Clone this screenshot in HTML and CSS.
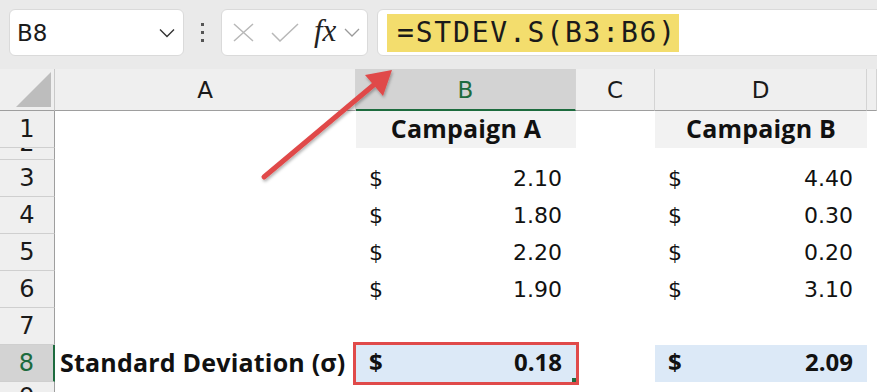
FILE: index.html
```html
<!DOCTYPE html>
<html lang="en">
<head>
    <meta charset="UTF-8">
    <title>STDEV.S</title>
    <link rel="stylesheet" href="styles.css">
</head>
<body>
    <div class="toolbar">
        <div class="namebox">
            <span>B8</span>
            <svg width="16" height="10" viewBox="0 0 16 10"><path d="M1 1.5 L8 8.5 L15 1.5" fill="none" stroke="#333" stroke-width="1.4"/></svg>
        </div>
        <div class="dots"><i></i><i></i><i></i></div>
        <div class="fxbox">
            <svg width="21" height="19" viewBox="0 0 21 19"><path d="M1 1 L20 18 M20 1 L1 18" stroke="#b8b8b8" stroke-width="1.5"/></svg>
            <svg width="28" height="19" viewBox="0 0 28 19"><path d="M1 10 L9 18 L27 1" fill="none" stroke="#b8b8b8" stroke-width="1.5"/></svg>
            <span class="fx">fx</span>
            <svg width="16" height="9" viewBox="0 0 16 9"><path d="M1 1 L8 8 L15 1" fill="none" stroke="#9a9a9a" stroke-width="1.3"/></svg>
        </div>
        <div class="formula"><span class="hl">=STDEV.S(B3:B6)</span></div>
    </div>

    <div class="sheet">
        <!-- column headers -->
        <div class="corner"><span class="tri"></span></div>
        <div class="colhead">A</div>
        <div class="colhead active">B</div>
        <div class="colhead">C</div>
        <div class="colhead">D</div>
        <div class="colhead"></div>

        <!-- row 1 -->
        <div class="rowhead">1</div>
        <div class="cell"></div>
        <div class="cell title">Campaign A</div>
        <div class="cell"></div>
        <div class="cell title">Campaign B</div>
        <div class="cell"></div>

        <!-- row 2 (squashed) -->
        <div class="rowhead tiny"><span>2</span></div>
        <div class="cell"></div>
        <div class="cell"></div>
        <div class="cell"></div>
        <div class="cell"></div>
        <div class="cell"></div>

        <!-- row 3 -->
        <div class="rowhead">3</div>
        <div class="cell"></div>
        <div class="cell acct"><span>$</span><span>2.10</span></div>
        <div class="cell"></div>
        <div class="cell acct"><span>$</span><span>4.40</span></div>
        <div class="cell"></div>

        <!-- row 4 -->
        <div class="rowhead">4</div>
        <div class="cell"></div>
        <div class="cell acct"><span>$</span><span>1.80</span></div>
        <div class="cell"></div>
        <div class="cell acct"><span>$</span><span>0.30</span></div>
        <div class="cell"></div>

        <!-- row 5 -->
        <div class="rowhead">5</div>
        <div class="cell"></div>
        <div class="cell acct"><span>$</span><span>2.20</span></div>
        <div class="cell"></div>
        <div class="cell acct"><span>$</span><span>0.20</span></div>
        <div class="cell"></div>

        <!-- row 6 -->
        <div class="rowhead">6</div>
        <div class="cell"></div>
        <div class="cell acct"><span>$</span><span>1.90</span></div>
        <div class="cell"></div>
        <div class="cell acct"><span>$</span><span>3.10</span></div>
        <div class="cell"></div>

        <!-- row 7 -->
        <div class="rowhead">7</div>
        <div class="cell"></div>
        <div class="cell"></div>
        <div class="cell"></div>
        <div class="cell"></div>
        <div class="cell"></div>

        <!-- row 8 -->
        <div class="rowhead active">8</div>
        <div class="cell label">Standard Deviation (σ)</div>
        <div class="cell acct result selected"><span>$</span><span>0.18</span><i class="handle"></i></div>
        <div class="cell"></div>
        <div class="cell acct result"><span>$</span><span>2.09</span></div>
        <div class="cell"></div>

        <!-- row 9 -->
        <div class="rowhead cut"><span>9</span></div>
        <div class="cell"></div>
        <div class="cell"></div>
        <div class="cell"></div>
        <div class="cell"></div>
        <div class="cell"></div>
    </div>

    <svg class="arrow" width="877" height="392" viewBox="0 0 877 392">
        <defs>
            <filter id="sh" x="-20%" y="-20%" width="140%" height="140%">
                <feDropShadow dx="1" dy="2" stdDeviation="1.5" flood-color="#000" flood-opacity="0.3"/>
            </filter>
        </defs>
        <g filter="url(#sh)">
            <path d="M264 177 L376 83" stroke="#e04a4a" stroke-width="5" stroke-linecap="round"/>
            <path d="M392 70 L365 75 L383 96 Z" fill="#e04a4a"/>
        </g>
    </svg>
</body>
</html>
```

FILE: styles.css
```css
body {
    margin: 0;
    padding: 0;
    width: 877px;
    height: 392px;
    overflow: hidden;
    background-color: #fff;
    font-family: "DejaVu Sans", sans-serif;
    color: #111;
    position: relative;
}

/* formula bar */
.toolbar {
    height: 69px;
    box-sizing: border-box;
    background-color: #eaeaea;
    display: flex;
    align-items: flex-start;
    padding: 9px 0 0 9px;
    overflow: hidden;
}
.namebox {
    width: 175px;
    height: 47px;
    box-sizing: border-box;
    background-color: #fff;
    border: 1px solid #dadada;
    border-radius: 6px;
    display: flex;
    align-items: center;
    justify-content: space-between;
    padding: 0 8px 0 7px;
    font-size: 23px;
    color: #1b1b1b;
}
.dots {
    width: 37px;
    height: 47px;
    display: flex;
    flex-direction: column;
    align-items: center;
    justify-content: center;
    gap: 5px;
}
.dots i {
    width: 3px;
    height: 3px;
    background-color: #555;
}
.fxbox {
    width: 147px;
    height: 47px;
    box-sizing: border-box;
    background-color: #fff;
    border: 1px solid #dadada;
    border-radius: 6px;
    display: flex;
    align-items: center;
    padding: 0 0 0 11px;
}
.fxbox svg:nth-child(2) {
    margin-left: 17px;
}
.fx {
    font-family: "Liberation Serif", serif;
    font-style: italic;
    font-size: 31px;
    color: #222;
    margin: -4px 8px 0 15px;
}
.formula {
    flex: 1;
    height: 47px;
    margin-left: 9px;
    margin-right: -10px;
    box-sizing: border-box;
    background-color: #fff;
    border: 1px solid #dadada;
    border-radius: 6px;
    padding: 4px 0 0 9px;
}
.hl {
    display: inline-block;
    height: 38px;
    line-height: 38px;
    background-color: #f3dd6d;
    padding: 0 2px 0 10px;
    font-family: "DejaVu Sans Mono", monospace;
    font-size: 28px;
    letter-spacing: 1.8px;
    color: #1a1a1a;
}

/* sheet grid */
.sheet {
    display: grid;
    grid-template-columns: 55px 301px 220px 79px 212px 10px;
    grid-template-rows: 42px 37px 12px repeat(6, 37px) 20px;
}
.corner {
    background-color: #efefef;
    border-right: 1px solid #c9c9c9;
    border-bottom: 1px solid #9e9e9e;
    position: relative;
}
.tri {
    position: absolute;
    right: 3px;
    bottom: 3px;
    width: 0;
    height: 0;
    border-left: 35px solid transparent;
    border-bottom: 35px solid #bdbdbd;
}
.colhead {
    background-color: #efefef;
    border-right: 1px solid #d4d4d4;
    border-bottom: 1px solid #9e9e9e;
    display: flex;
    align-items: flex-end;
    justify-content: center;
    padding-bottom: 7px;
    box-sizing: border-box;
    font-size: 23px;
    color: #1a1a1a;
}
.colhead.active {
    background-color: #d3d3d3;
    color: #1d6b3e;
    border-bottom: 2px solid #1d6b3e;
    padding-bottom: 6px;
}
.rowhead {
    background-color: #efefef;
    border-right: 1px solid #9e9e9e;
    border-bottom: 1px solid #cfcfcf;
    box-sizing: border-box;
    display: flex;
    align-items: flex-end;
    justify-content: center;
    padding-bottom: 4px;
    font-size: 24px;
    color: #1a1a1a;
    overflow: hidden;
}
.rowhead.tiny,
.rowhead.cut {
    align-items: flex-start;
    padding: 0;
}
.rowhead.tiny span {
    line-height: 1;
    margin-top: -17px;
}
.rowhead.cut span {
    line-height: 1;
    margin-top: 3px;
}
.rowhead.active {
    background-color: #d3d3d3;
    color: #1d6b3e;
    border-right: 2px solid #1d6b3e;
}
.cell {
    box-sizing: border-box;
    font-size: 22px;
    display: flex;
    align-items: flex-end;
    padding-bottom: 6px;
    white-space: nowrap;
}
.title {
    background-color: #f2f2f2;
    justify-content: center;
    font-family: "Open Sans", sans-serif;
    font-size: 25px;
    font-weight: 700;
    letter-spacing: 0.2px;
    padding-bottom: 3px;
}
.acct {
    justify-content: space-between;
    padding-left: 13px;
    padding-right: 14px;
}
.label {
    font-family: "Open Sans", sans-serif;
    font-size: 25px;
    font-weight: 700;
    letter-spacing: 0.2px;
    padding-left: 5px;
    padding-bottom: 3px;
}
.result {
    background-color: #dce9f7;
    font-family: "Open Sans", sans-serif;
    font-size: 24px;
    font-weight: 700;
    padding-bottom: 4px;
}
.selected {
    outline: 3px solid #e04a4a;
    position: relative;
    z-index: 1;
}
.handle {
    position: absolute;
    right: 0;
    bottom: 0;
    width: 4px;
    height: 4px;
    background-color: #1d6b3e;
}

.arrow {
    position: absolute;
    left: 0;
    top: 0;
    pointer-events: none;
}
```
